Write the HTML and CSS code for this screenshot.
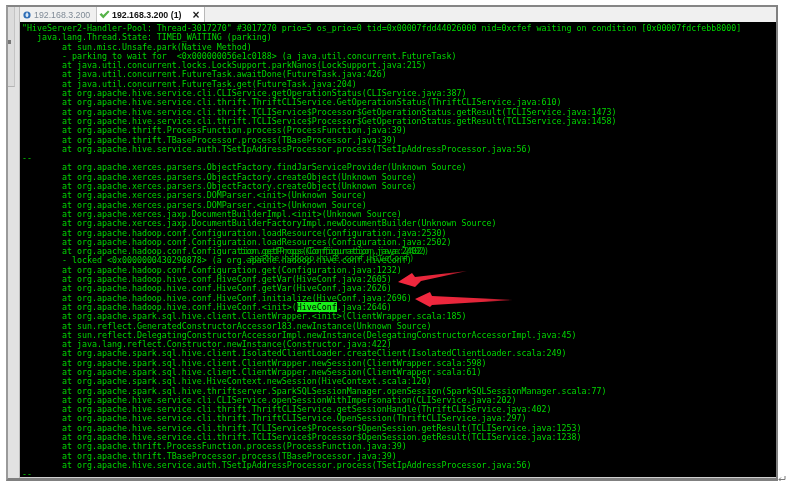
FILE: index.html
```html
<!DOCTYPE html>
<html lang="en">
<head>
<meta charset="utf-8">
<title>192.168.3.200 (1)</title>
<link rel="stylesheet" href="styles.css">
</head>
<body>
<div class="window">
  <aside class="rail">
    <div class="rail-top"><span class="grip"></span></div>
  </aside>
  <main class="content">
    <nav class="tabs">
      <div class="tab">
        <svg class="tab-icon" viewBox="0 0 10 10"><circle cx="5" cy="5" r="4.5" fill="#2f6db5"/><circle cx="5" cy="5" r="2.2" fill="#9cc3ea"/><rect x="4.3" y="2" width="1.5" height="5.6" fill="#fff"/></svg>
        <span>192.168.3.200</span>
      </div>
      <div class="tab tab-active">
        <svg class="tab-icon-check" viewBox="0 0 11 9"><path d="M0.5 4.5 L2.5 3 L4.3 5 L9 0.5 L10.5 1.7 L4.3 8.5 Z" fill="#57b34a"/></svg>
        <span>192.168.3.200 (1)</span>
        <span class="close">×</span>
      </div>
    </nav>
    <section class="terminal">
<pre class="log">"HiveServer2-Handler-Pool: Thread-3017270" #3017270 prio=5 os_prio=0 tid=0x00007fdd44026000 nid=0xcfef waiting on condition [0x00007fdcfebb8000]
   java.lang.Thread.State: TIMED_WAITING (parking)
        at sun.misc.Unsafe.park(Native Method)
        - parking to wait for  &lt;0x000000056e1c0188&gt; (a java.util.concurrent.FutureTask)
        at java.util.concurrent.locks.LockSupport.parkNanos(LockSupport.java:215)
        at java.util.concurrent.FutureTask.awaitDone(FutureTask.java:426)
        at java.util.concurrent.FutureTask.get(FutureTask.java:204)
        at org.apache.hive.service.cli.CLIService.getOperationStatus(CLIService.java:387)
        at org.apache.hive.service.cli.thrift.ThriftCLIService.GetOperationStatus(ThriftCLIService.java:610)
        at org.apache.hive.service.cli.thrift.TCLIService$Processor$GetOperationStatus.getResult(TCLIService.java:1473)
        at org.apache.hive.service.cli.thrift.TCLIService$Processor$GetOperationStatus.getResult(TCLIService.java:1458)
        at org.apache.thrift.ProcessFunction.process(ProcessFunction.java:39)
        at org.apache.thrift.TBaseProcessor.process(TBaseProcessor.java:39)
        at org.apache.hive.service.auth.TSetIpAddressProcessor.process(TSetIpAddressProcessor.java:56)
--
        at org.apache.xerces.parsers.ObjectFactory.findJarServiceProvider(Unknown Source)
        at org.apache.xerces.parsers.ObjectFactory.createObject(Unknown Source)
        at org.apache.xerces.parsers.ObjectFactory.createObject(Unknown Source)
        at org.apache.xerces.parsers.DOMParser.&lt;init&gt;(Unknown Source)
        at org.apache.xerces.parsers.DOMParser.&lt;init&gt;(Unknown Source)
        at org.apache.xerces.jaxp.DocumentBuilderImpl.&lt;init&gt;(Unknown Source)
        at org.apache.xerces.jaxp.DocumentBuilderFactoryImpl.newDocumentBuilder(Unknown Source)
        at org.apache.hadoop.conf.Configuration.loadResource(Configuration.java:2530)
        at org.apache.hadoop.conf.Configuration.loadResources(Configuration.java:2502)
        at org.apache.hadoop.conf.Configura<span class="smear">tion.getProps(Configuration.java:2402)<span class="ghost ghost-a">tion.getProps(Configuration.java:2402)</span></span>
        - locked &lt;0x0000000430290878&gt; (a org<span class="smear">.apache.hadoop.hive.conf.HiveConf)<span class="ghost ghost-b">.apache.hadoop.hive.conf.HiveConf)</span></span>
        at org.apache.hadoop.conf.Configuration.get(Configuration.java:1232)
        at org.apache.hadoop.hive.conf.HiveConf.getVar(HiveConf.java:2605)
        at org.apache.hadoop.hive.conf.HiveConf.getVar(HiveConf.java:2626)
        at org.apache.hadoop.hive.conf.HiveConf.initialize(HiveConf.java:2696)
        at org.apache.hadoop.hive.conf.HiveConf.&lt;init&gt;(<mark class="hit">HiveConf</mark>.java:2646)
        at org.apache.spark.sql.hive.client.ClientWrapper.&lt;init&gt;(ClientWrapper.scala:185)
        at sun.reflect.GeneratedConstructorAccessor183.newInstance(Unknown Source)
        at sun.reflect.DelegatingConstructorAccessorImpl.newInstance(DelegatingConstructorAccessorImpl.java:45)
        at java.lang.reflect.Constructor.newInstance(Constructor.java:422)
        at org.apache.spark.sql.hive.client.IsolatedClientLoader.createClient(IsolatedClientLoader.scala:249)
        at org.apache.spark.sql.hive.client.ClientWrapper.newSession(ClientWrapper.scala:598)
        at org.apache.spark.sql.hive.client.ClientWrapper.newSession(ClientWrapper.scala:61)
        at org.apache.spark.sql.hive.HiveContext.newSession(HiveContext.scala:120)
        at org.apache.spark.sql.hive.thriftserver.SparkSQLSessionManager.openSession(SparkSQLSessionManager.scala:77)
        at org.apache.hive.service.cli.CLIService.openSessionWithImpersonation(CLIService.java:202)
        at org.apache.hive.service.cli.thrift.ThriftCLIService.getSessionHandle(ThriftCLIService.java:402)
        at org.apache.hive.service.cli.thrift.ThriftCLIService.OpenSession(ThriftCLIService.java:297)
        at org.apache.hive.service.cli.thrift.TCLIService$Processor$OpenSession.getResult(TCLIService.java:1253)
        at org.apache.hive.service.cli.thrift.TCLIService$Processor$OpenSession.getResult(TCLIService.java:1238)
        at org.apache.thrift.ProcessFunction.process(ProcessFunction.java:39)
        at org.apache.thrift.TBaseProcessor.process(TBaseProcessor.java:39)
        at org.apache.hive.service.auth.TSetIpAddressProcessor.process(TSetIpAddressProcessor.java:56)
--</pre>
      <svg class="arrows" viewBox="0 0 756 455">
        <defs>
          <linearGradient id="tail-a" gradientUnits="userSpaceOnUse" x1="385" y1="0" x2="448" y2="0"><stop offset="0" stop-color="#f2283f"/><stop offset="0.6" stop-color="#e02538"/><stop offset="1" stop-color="#7a0e1c"/></linearGradient>
          <linearGradient id="tail-b" gradientUnits="userSpaceOnUse" x1="400" y1="0" x2="494" y2="0"><stop offset="0" stop-color="#f2283f"/><stop offset="0.7" stop-color="#e02538"/><stop offset="1" stop-color="#7a0e1c"/></linearGradient>
        </defs>
        <path d="M378 260 L392 251 L395 255 L447 249 L401 259 L395 265 Z" fill="url(#tail-a)"/>
        <path d="M395 277 L410 270 L412 274 L493 278 L412 283 L410 285 Z" fill="url(#tail-b)"/>
      </svg>
    </section>
  </main>
  <svg class="corner" viewBox="0 0 8 7"><path d="M7 0 V3.5 H1 M3 1.5 L1 3.5 L3 5.5" fill="none" stroke="#777" stroke-width="1"/></svg>
</div>
</body>
</html>
```

FILE: styles.css
```css
html, body {
  margin: 0;
  padding: 0;
  background: #fff;
}

.window {
  position: relative;
  display: flex;
  box-sizing: border-box;
  width: 772px;
  height: 476px;
  margin: 5px 0 0 6px;
  border-top: 2px solid #858585;
  border-left: 2px solid #9a9a9a;
  border-right: 2px solid #808080;
  border-bottom: 3px solid #808080;
}

.rail {
  flex: 0 0 12px;
  box-sizing: border-box;
  background: #e2e2e2;
  border-right: 1px solid #bdbdbd;
}

.rail-top {
  position: relative;
  box-sizing: border-box;
  width: 7px;
  height: 80px;
  background: #dcdcdc;
  border-right: 1px solid #c4c4c4;
  border-bottom: 1px solid #b4b4b4;
}

.grip {
  position: absolute;
  top: 33px;
  left: 0;
  width: 3px;
  height: 4px;
  background: #777;
}

.content {
  flex: 1;
  display: flex;
  flex-direction: column;
  min-width: 0;
  border-bottom: 1px solid #cfcfcf;
}

.tabs {
  display: flex;
  flex: 0 0 15px;
  background: #f0f0f0;
  font-family: "Liberation Sans", Arial, sans-serif;
  font-size: 8.8px;
  color: #7f8a96;
  filter: blur(0.25px);
}

.tab {
  display: flex;
  align-items: center;
  box-sizing: border-box;
  width: 76px;
  padding-left: 3px;
  gap: 3px;
  background: #f0f0f0;
}

.tab-active {
  width: 109px;
  padding-left: 2px;
  gap: 2px;
  background: #fff;
  color: #111;
  font-weight: 700;
  border-left: 1px solid #c4c4c4;
  border-right: 1px solid #b8b8b8;
}

.tab-icon {
  width: 8px;
  height: 8px;
}

.tab-icon-check {
  width: 11px;
  height: 9px;
}

.close {
  margin-left: 9px;
  font-size: 12px;
  color: #222;
}

.terminal {
  position: relative;
  flex: 1;
  background: #000;
  overflow: hidden;
}

.log {
  margin: 0;
  padding: 2px 0 0 2px;
  font-family: "DejaVu Sans Mono", "Liberation Mono", monospace;
  font-size: 8.3px;
  line-height: 9.3px;
  color: #00d800;
  white-space: pre;
  filter: blur(0.35px);
}

.hit {
  background: #19f019;
  color: #000;
}

.smear {
  position: relative;
}

.ghost {
  position: absolute;
  left: 2.5px;
  white-space: pre;
  color: #00b000;
}

.ghost-a {
  top: 1px;
}

.ghost-b {
  top: -1px;
}

.arrows {
  position: absolute;
  top: 0;
  left: 0;
  width: 756px;
  height: 455px;
}

.corner {
  position: absolute;
  right: -10px;
  bottom: -5px;
  width: 8px;
  height: 7px;
}
```
